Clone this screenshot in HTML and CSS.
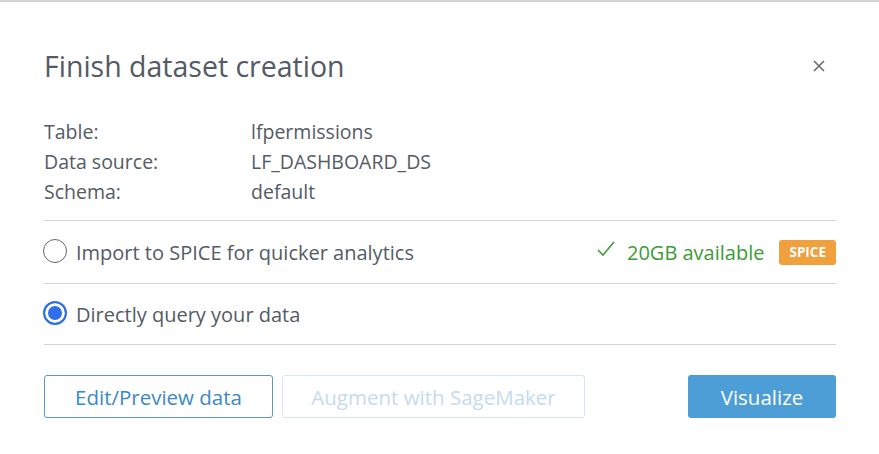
FILE: index.html
```html
<!DOCTYPE html>
<html lang="en">
<head>
    <meta charset="UTF-8">
    <meta name="viewport" content="width=device-width, initial-scale=1.0">
    <title>Finish dataset creation</title>
    <link rel="stylesheet" href="styles.css">
</head>
<body>

    <div class="modal">
        <div class="modal-header">
            <h2 class="modal-title">Finish dataset creation</h2>
            <button class="close-button" aria-label="Close">
                <svg width="12" height="12" viewBox="0 0 12 12">
                    <path d="M1 1 L11 11 M11 1 L1 11" stroke="#666" stroke-width="1.5" fill="none"/>
                </svg>
            </button>
        </div>

        <div class="details">
            <div class="detail-label">Table:</div>
            <div class="detail-value">lfpermissions</div>
            <div class="detail-label">Data source:</div>
            <div class="detail-value">LF_DASHBOARD_DS</div>
            <div class="detail-label">Schema:</div>
            <div class="detail-value">default</div>
        </div>

        <div class="option option-first">
            <label class="radio-label">
                <span class="radio"></span>
                Import to SPICE for quicker analytics
            </label>
            <div class="spice-info">
                <svg class="check" width="18" height="16" viewBox="0 0 18 16">
                    <path d="M1 9 L6 14 L17 1" stroke="#3d9b35" stroke-width="1.6" fill="none"/>
                </svg>
                <span class="available">20GB available</span>
                <span class="badge">SPICE</span>
            </div>
        </div>

        <div class="option option-second">
            <label class="radio-label">
                <span class="radio checked"></span>
                Directly query your data
            </label>
        </div>

        <div class="actions">
            <div class="actions-left">
                <button class="btn btn-outline">Edit/Preview data</button>
                <button class="btn btn-disabled">Augment with SageMaker</button>
            </div>
            <button class="btn btn-primary">Visualize</button>
        </div>
    </div>

</body>
</html>
```

FILE: styles.css
```css
body {
    margin: 0;
    background: #fff;
    font-family: "Open Sans", Arial, sans-serif;
    color: #545b64;
    border-top: 2px solid #d5d5d5;
}

.modal {
    padding: 0 43px 0 44px;
}

.modal-header {
    display: flex;
    justify-content: space-between;
    align-items: center;
    padding-top: 46px;
}

.modal-title {
    margin: 0;
    font-size: 28.5px;
    font-weight: normal;
    line-height: 36px;
    color: #545b64;
}

.close-button {
    background: none;
    border: none;
    padding: 0;
    margin-right: 11px;
    cursor: pointer;
    display: flex;
}

.details {
    display: grid;
    grid-template-columns: 207px 1fr;
    margin-top: 33px;
    padding-bottom: 13px;
    font-size: 19.5px;
    line-height: 30px;
    border-bottom: 1px solid #d5d5d5;
}

.option {
    display: flex;
    justify-content: space-between;
    align-items: center;
    border-bottom: 1px solid #d5d5d5;
}

.option-first {
    height: 62px;
}

.option-second {
    height: 60px;
}

.radio-label {
    display: flex;
    align-items: center;
    gap: 9px;
    font-size: 20px;
    margin-left: -1px;
}

.radio {
    width: 24px;
    height: 24px;
    border: 1.5px solid #666;
    border-radius: 50%;
    box-sizing: border-box;
    margin-top: -2px;
}

.radio.checked {
    border: 2px solid #2f6fea;
    box-shadow: inset 0 0 0 3px #fff;
    background: #2f6fea;
}

.spice-info {
    display: flex;
    align-items: center;
    color: #3d9b35;
    font-size: 20px;
}

.check {
    margin-right: 12px;
    margin-top: -6px;
}

.badge {
    margin-left: 15px;
    background: #f0a03c;
    color: #fff;
    font-size: 13.5px;
    font-weight: bold;
    padding: 0 10px;
    line-height: 25px;
    border-radius: 3px;
}

.actions {
    display: flex;
    justify-content: space-between;
    margin-top: 30px;
}

.actions-left {
    display: flex;
    gap: 9px;
}

.btn {
    font-family: "Open Sans", Arial, sans-serif;
    font-size: 20.5px;
    height: 43px;
    border-radius: 3px;
    background: #fff;
    cursor: pointer;
}

.btn-outline {
    width: 229px;
    border: 1.5px solid #5d97c6;
    color: #3c89c5;
}

.btn-disabled {
    width: 303px;
    border: 1.5px solid #d7e6f2;
    color: #c5dbee;
    cursor: default;
}

.btn-primary {
    width: 148px;
    border: none;
    background: #4d9ed6;
    color: #fff;
}
```
